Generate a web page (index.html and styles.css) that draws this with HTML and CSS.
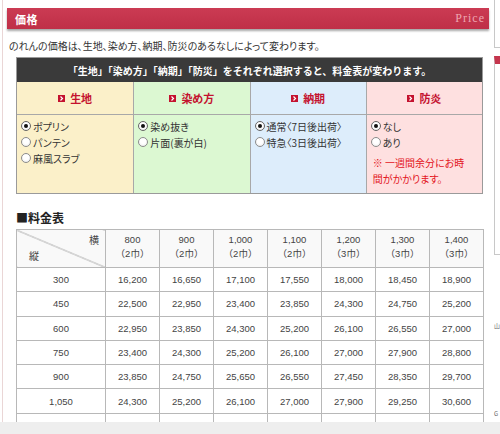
FILE: index.html
```html
<!DOCTYPE html>
<html lang="ja">
<head>
<meta charset="utf-8">
<title>価格</title>
<link rel="stylesheet" href="styles.css">
</head>
<body>
<div class="page">
  <main class="main">
    <h2 class="section-head"><span class="section-title">価格</span><span class="section-en">Price</span></h2>
    <p class="intro">のれんの価格は、生地、染め方、納期、防災のあるなしによって変わります。</p>

    <div class="selbox">
      <div class="selbox-head">「生地」「染め方」「納期」「防災」をそれぞれ選択すると、料金表が変わります。</div>
      <div class="selcols">
        <div class="selcol col-cloth">
          <div class="selcol-head"><span class="mark"><svg viewBox="0 0 7 7" width="7" height="7"><path d="M2.5 1.5 L4.5 3.5 L2.5 5.5" fill="none" stroke="#fff" stroke-width="1.2"/></svg></span>生地</div>
          <div class="selcol-body">
            <div class="opt"><span class="radio on"></span>ポプリン</div>
            <div class="opt"><span class="radio"></span>パンテン</div>
            <div class="opt"><span class="radio"></span>麻風スラブ</div>
          </div>
        </div>
        <div class="selcol col-dye">
          <div class="selcol-head"><span class="mark"><svg viewBox="0 0 7 7" width="7" height="7"><path d="M2.5 1.5 L4.5 3.5 L2.5 5.5" fill="none" stroke="#fff" stroke-width="1.2"/></svg></span>染め方</div>
          <div class="selcol-body">
            <div class="opt"><span class="radio on"></span>染め抜き</div>
            <div class="opt"><span class="radio"></span>片面(裏が白)</div>
          </div>
        </div>
        <div class="selcol col-date">
          <div class="selcol-head"><span class="mark"><svg viewBox="0 0 7 7" width="7" height="7"><path d="M2.5 1.5 L4.5 3.5 L2.5 5.5" fill="none" stroke="#fff" stroke-width="1.2"/></svg></span>納期</div>
          <div class="selcol-body">
            <div class="opt"><span class="radio on"></span>通常〈7日後出荷〉</div>
            <div class="opt"><span class="radio"></span>特急〈3日後出荷〉</div>
          </div>
        </div>
        <div class="selcol col-fire">
          <div class="selcol-head"><span class="mark"><svg viewBox="0 0 7 7" width="7" height="7"><path d="M2.5 1.5 L4.5 3.5 L2.5 5.5" fill="none" stroke="#fff" stroke-width="1.2"/></svg></span>防炎</div>
          <div class="selcol-body">
            <div class="opt"><span class="radio on"></span>なし</div>
            <div class="opt"><span class="radio"></span>あり</div>
            <p class="note">※ 一週間余分にお時<br>間がかかります。</p>
          </div>
        </div>
      </div>
    </div>

    <h3 class="table-title">■料金表</h3>
    <table class="price">
      <colgroup><col class="c-first"><col><col><col><col><col><col><col></colgroup>
      <thead>
        <tr>
          <th class="corner"><span class="yoko">横</span><span class="tate">縦</span></th>
          <th>800<br>（2巾）</th>
          <th>900<br>（2巾）</th>
          <th>1,000<br>（2巾）</th>
          <th>1,100<br>（2巾）</th>
          <th>1,200<br>（3巾）</th>
          <th>1,300<br>（3巾）</th>
          <th>1,400<br>（3巾）</th>
        </tr>
      </thead>
      <tbody>
        <tr><td>300</td><td>16,200</td><td>16,650</td><td>17,100</td><td>17,550</td><td>18,000</td><td>18,450</td><td>18,900</td></tr>
        <tr><td>450</td><td>22,500</td><td>22,950</td><td>23,400</td><td>23,850</td><td>24,300</td><td>24,750</td><td>25,200</td></tr>
        <tr><td>600</td><td>22,950</td><td>23,850</td><td>24,300</td><td>25,200</td><td>26,100</td><td>26,550</td><td>27,000</td></tr>
        <tr><td>750</td><td>23,400</td><td>24,300</td><td>25,200</td><td>26,100</td><td>27,000</td><td>27,900</td><td>28,800</td></tr>
        <tr><td>900</td><td>23,850</td><td>24,750</td><td>25,650</td><td>26,550</td><td>27,450</td><td>28,350</td><td>29,700</td></tr>
        <tr><td>1,050</td><td>24,300</td><td>25,200</td><td>26,100</td><td>27,000</td><td>27,900</td><td>29,250</td><td>30,600</td></tr>
        <tr><td></td><td></td><td></td><td></td><td></td><td></td><td></td><td></td></tr>
      </tbody>
    </table>
  </main>

  <aside class="side">
    <div class="side-box first"></div>
    <div class="side-box second"></div>
    <div class="side-glyph g1">山</div>
    <div class="side-glyph g2">G</div>
  </aside>
</div>
<div class="bottom-bar"></div>
</body>
</html>
```

FILE: styles.css
```css
html, body {
  margin: 0;
  padding: 0;
  overflow: hidden;
  background: #fff;
}
body {
  font-family: "Noto Sans CJK JP", "Liberation Sans", sans-serif;
  color: #333;
  font-size: 10px;
  width: 500px;
  height: 434px;
}
.page {
  display: flex;
  align-items: flex-start;
  width: 500px;
  height: 434px;
  overflow: hidden;
}
.main {
  flex: none;
  width: 486px;
  margin-left: 2px;
  border-left: 1px solid #ead6d6;
  padding: 8px 0 0 4px;
  height: 426px;
  overflow: hidden;
}
.section-head {
  margin: 0;
  width: 482px;
  height: 21px;
  box-sizing: border-box;
  padding: 0 4px 0 8px;
  display: flex;
  align-items: center;
  justify-content: space-between;
  background: linear-gradient(#cb3b53, #bf2f47);
  box-shadow: 0 2px 2px rgba(0,0,0,0.35);
}
.section-title {
  color: #fff;
  font-size: 11px;
  font-weight: bold;
  letter-spacing: 0.5px;
}
.section-en {
  font-family: "Liberation Serif", serif;
  font-weight: normal;
  font-size: 12px;
  letter-spacing: 1px;
  color: #eea6b2;
}
.intro {
  margin: 10px 0 0 2px;
  font-size: 10px;
  line-height: 14px;
  color: #333;
  font-feature-settings: "palt";
}
.selbox {
  margin: 4px 0 0 9px;
  width: 467px;
  border: 1px solid #9a9a9a;
  box-sizing: border-box;
}
.selbox-head {
  height: 24px;
  background: #3a3a3a;
  color: #fff;
  font-weight: bold;
  font-size: 10px;
  display: flex;
  align-items: center;
  justify-content: center;
}
.selcols {
  display: grid;
  grid-template-columns: repeat(4, 1fr);
}
.selcol + .selcol {
  border-left: 1px solid #a8a8a8;
}
.col-cloth { background: #fbf0c9; }
.col-dye { background: #dcf8d2; }
.col-date { background: #ddedfb; }
.col-fire { background: #fee0e0; }
.selcol-head {
  height: 32px;
  border-bottom: 1px solid #a8a8a8;
  display: flex;
  align-items: center;
  justify-content: center;
  color: #c4122f;
  font-weight: bold;
  font-size: 11px;
}
.mark {
  display: inline-flex;
  width: 7px;
  height: 7px;
  background: #c4122f;
  margin-right: 5px;
}
.selcol-body {
  height: 78px;
  padding: 3px 4px 0 4px;
  box-sizing: border-box;
  font-size: 10px;
  color: #333;
}
.opt {
  display: flex;
  align-items: center;
  height: 16px;
  font-feature-settings: "palt";
}
.radio {
  width: 10px;
  height: 10px;
  box-sizing: border-box;
  border-radius: 50%;
  border: 1px solid #8c8c8c;
  background: radial-gradient(circle at 50% 40%, #fff 40%, #e6e6e6 100%);
  margin-right: 2px;
  flex: none;
  display: flex;
  align-items: center;
  justify-content: center;
}
.radio.on {
  border-color: #666;
}
.radio.on::after {
  content: "";
  width: 4px;
  height: 4px;
  border-radius: 50%;
  background: #111;
}
.note {
  margin: 5px 0 0 2px;
  color: #e3141c;
  font-size: 10px;
  line-height: 16px;
  font-feature-settings: "palt";
}
.table-title {
  margin: 15px 0 0 9px;
  font-size: 12px;
  font-weight: bold;
  line-height: 18px;
  color: #222;
}
.price {
  margin: 2px 0 0 9px;
  width: 467px;
  table-layout: fixed;
  border-collapse: collapse;
  font-family: "Liberation Sans", "Noto Sans CJK JP", sans-serif;
  font-size: 9.5px;
  color: #444;
}
.price col { width: 54px; }
.price col.c-first { width: 89px; }
.price th, .price td {
  border: 1px solid #b8b8b8;
  text-align: center;
  padding: 0;
  font-weight: normal;
}
.price thead th {
  height: 38px;
  background: #f9f9f9;
  line-height: 14px;
  padding-bottom: 4px;
  box-sizing: border-box;
}
.price tbody td {
  height: 23.3px;
}
.price th.corner {
  background: linear-gradient(to top right, #f9f9f9 calc(50% - 0.7px), #9a9a9a 50%, #f9f9f9 calc(50% + 0.7px));
  padding: 0;
}
.corner .yoko, .corner .tate {
  display: block;
  font-family: "Noto Sans CJK JP", sans-serif;
  font-size: 10px;
  line-height: 12px;
}
.corner .yoko { text-align: right; padding-right: 6px; margin-top: -2px; }
.corner .tate { text-align: left; padding-left: 12px; margin-top: 4px; }

.side {
  flex: none;
  width: 6px;
  margin-left: 1px;
  display: flex;
  flex-direction: column;
}
.side-box {
  border: 1px solid #c8c8c8;
  border-right: none;
  background: #fff;
}
.side-box.first {
  margin-top: -2px;
  height: 48px;
}
.side-box.second {
  margin-top: 8px;
  height: 190px;
  border-top: 8px solid #c5354d;
}
.side-glyph {
  font-size: 6px;
  color: #666;
  line-height: 8px;
}
.side-glyph.g1 { margin-top: 67px; }
.side-glyph.g2 { margin-top: 80px; }

.bottom-bar {
  position: fixed;
  left: 0;
  right: 0;
  bottom: 0;
  height: 12px;
  background: #eeeeee;
}
```
